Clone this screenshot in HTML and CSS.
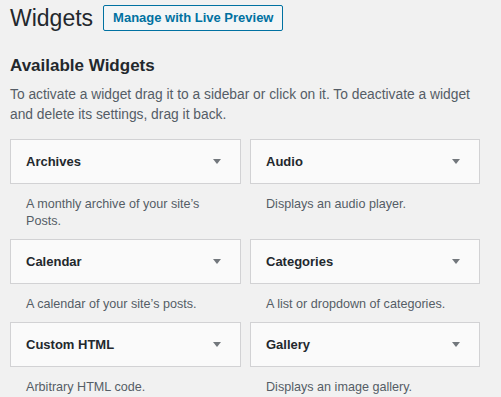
FILE: index.html
```html
<!DOCTYPE html>
<html>

<head>
  <meta charset="utf-8">
  <meta name="viewport" content="width=device-width">
  <title>Widgets</title>

  <link rel="stylesheet" href="styles.css">
</head>

<body>
  <div class="wrap">
    <div class="page-header">
      <h1>Widgets</h1>
      <a class="page-title-action" href="#">Manage with Live Preview</a>
    </div>

    <h2>Available Widgets</h2>
    <p class="intro">To activate a widget drag it to a sidebar or click on it. To deactivate a widget and delete its settings, drag it back.</p>

    <div class="widget-list">
      <div class="widget">
        <div class="widget-top">
          <span class="widget-title">Archives</span>
          <span class="widget-arrow"></span>
        </div>
        <div class="widget-description">A monthly archive of your site’s Posts.</div>
      </div>
      <div class="widget">
        <div class="widget-top">
          <span class="widget-title">Audio</span>
          <span class="widget-arrow"></span>
        </div>
        <div class="widget-description">Displays an audio player.</div>
      </div>
      <div class="widget">
        <div class="widget-top">
          <span class="widget-title">Calendar</span>
          <span class="widget-arrow"></span>
        </div>
        <div class="widget-description">A calendar of your site’s posts.</div>
      </div>
      <div class="widget">
        <div class="widget-top">
          <span class="widget-title">Categories</span>
          <span class="widget-arrow"></span>
        </div>
        <div class="widget-description">A list or dropdown of categories.</div>
      </div>
      <div class="widget">
        <div class="widget-top">
          <span class="widget-title">Custom HTML</span>
          <span class="widget-arrow"></span>
        </div>
        <div class="widget-description">Arbitrary HTML code.</div>
      </div>
      <div class="widget">
        <div class="widget-top">
          <span class="widget-title">Gallery</span>
          <span class="widget-arrow"></span>
        </div>
        <div class="widget-description">Displays an image gallery.</div>
      </div>
    </div>
  </div>
</body>

</html>
```

FILE: styles.css
```css
html,
body {
  margin: 0;
  padding: 0;
  width: 100%;
  height: 100%;
  overflow: hidden;
}

body {
  background: #f1f1f1;
  color: #444;
  font-family: "Liberation Sans", Arial, sans-serif;
  font-size: 13px;
}

.wrap {
  padding: 5px 20px 0 10px;
}

.page-header {
  display: flex;
  align-items: center;
  gap: 10px;
}

h1 {
  margin: 0;
  font-size: 23px;
  font-weight: 400;
  line-height: 26px;
  color: #23282d;
}

.page-title-action {
  display: block;
  box-sizing: border-box;
  height: 26px;
  line-height: 24px;
  padding: 0 9px;
  border: 1px solid #0071a1;
  border-radius: 2px;
  background: #f3f5f6;
  color: #0071a1;
  font-weight: 600;
  text-decoration: none;
}

h2 {
  margin: 23px 0 0;
  font-size: 17px;
  font-weight: 600;
  line-height: 24px;
  color: #23282d;
}

.intro {
  margin: 7px 0 0;
  font-size: 13.8px;
  line-height: 20px;
  color: #555d66;
}

.widget-list {
  display: grid;
  grid-template-columns: 231px 230px;
  column-gap: 9px;
  margin-top: 14px;
}

.widget-top {
  display: flex;
  align-items: center;
  justify-content: space-between;
  height: 43px;
  padding: 0 19px 0 15px;
  border: 1px solid #d2d2d4;
  background: #fafafa;
}

.widget-title {
  font-weight: 600;
  color: #23282d;
}

.widget-arrow {
  width: 0;
  height: 0;
  border-left: 4px solid transparent;
  border-right: 4px solid transparent;
  border-top: 5px solid #72777c;
}

.widget-description {
  padding: 12px 24px 9px 16px;
  font-size: 12.6px;
  line-height: 17px;
  color: #555d66;
}
```
